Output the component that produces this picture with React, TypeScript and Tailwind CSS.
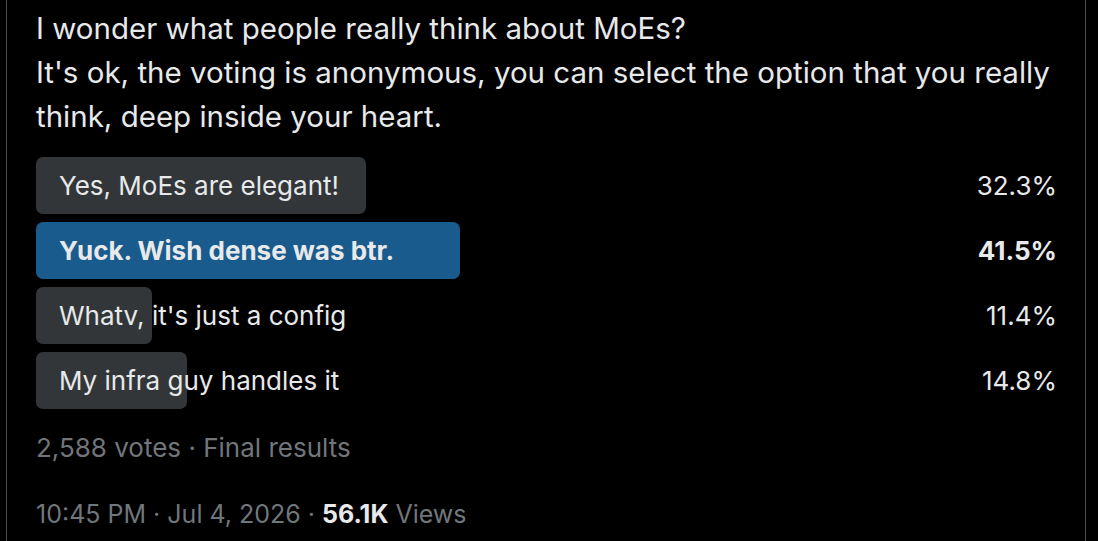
import React from "react";

const options = [
  { label: "Yes, MoEs are elegant!", pct: 32.3, win: false },
  { label: "Yuck. Wish dense was btr.", pct: 41.5, win: true },
  { label: "Whatv, it's just a config", pct: 11.4, win: false },
  { label: "My infra guy handles it", pct: 14.8, win: false },
];

export default function App() {
  return (
    <div className="w-[1098px] h-[541px] bg-black overflow-hidden font-['Inter',sans-serif] text-[#e7e9ea]">
      <div className="ml-[6px] w-[1080px] h-full border-x border-[#4a4d50] pl-[29px] pr-[28px] pt-[6px]">
        <p className="text-[29.5px] leading-[44px]">
          I wonder what people really think about MoEs?
          <br />
          It's ok, the voting is anonymous, you can select the option that you really think, deep inside your heart.
        </p>

        <div className="mt-[19px] flex flex-col gap-[8px]">
          {options.map((o) => (
            <div key={o.label} className="relative flex items-center justify-between h-[57px]">
              <div
                className={`absolute left-0 top-0 h-full rounded-[7px] ${o.win ? "bg-[#195b8d]" : "bg-[#333639]"}`}
                style={{ width: `${o.pct}%` }}
              />
              <span className={`relative pl-[23px] text-[26px] ${o.win ? "font-bold" : ""}`}>{o.label}</span>
              <span className={`relative text-[26px] ${o.win ? "font-bold" : ""}`}>{o.pct}%</span>
            </div>
          ))}
        </div>

        <div className="mt-[21px] text-[26px] leading-[36px] text-[#71767b]">2,588 votes · Final results</div>

        <div className="mt-[30px] text-[25px] leading-[36px] text-[#71767b]">
          10:45 PM · Jul 4, 2026 · <span className="font-bold text-[#e7e9ea]">56.1K</span> Views
        </div>
      </div>
    </div>
  );
}
